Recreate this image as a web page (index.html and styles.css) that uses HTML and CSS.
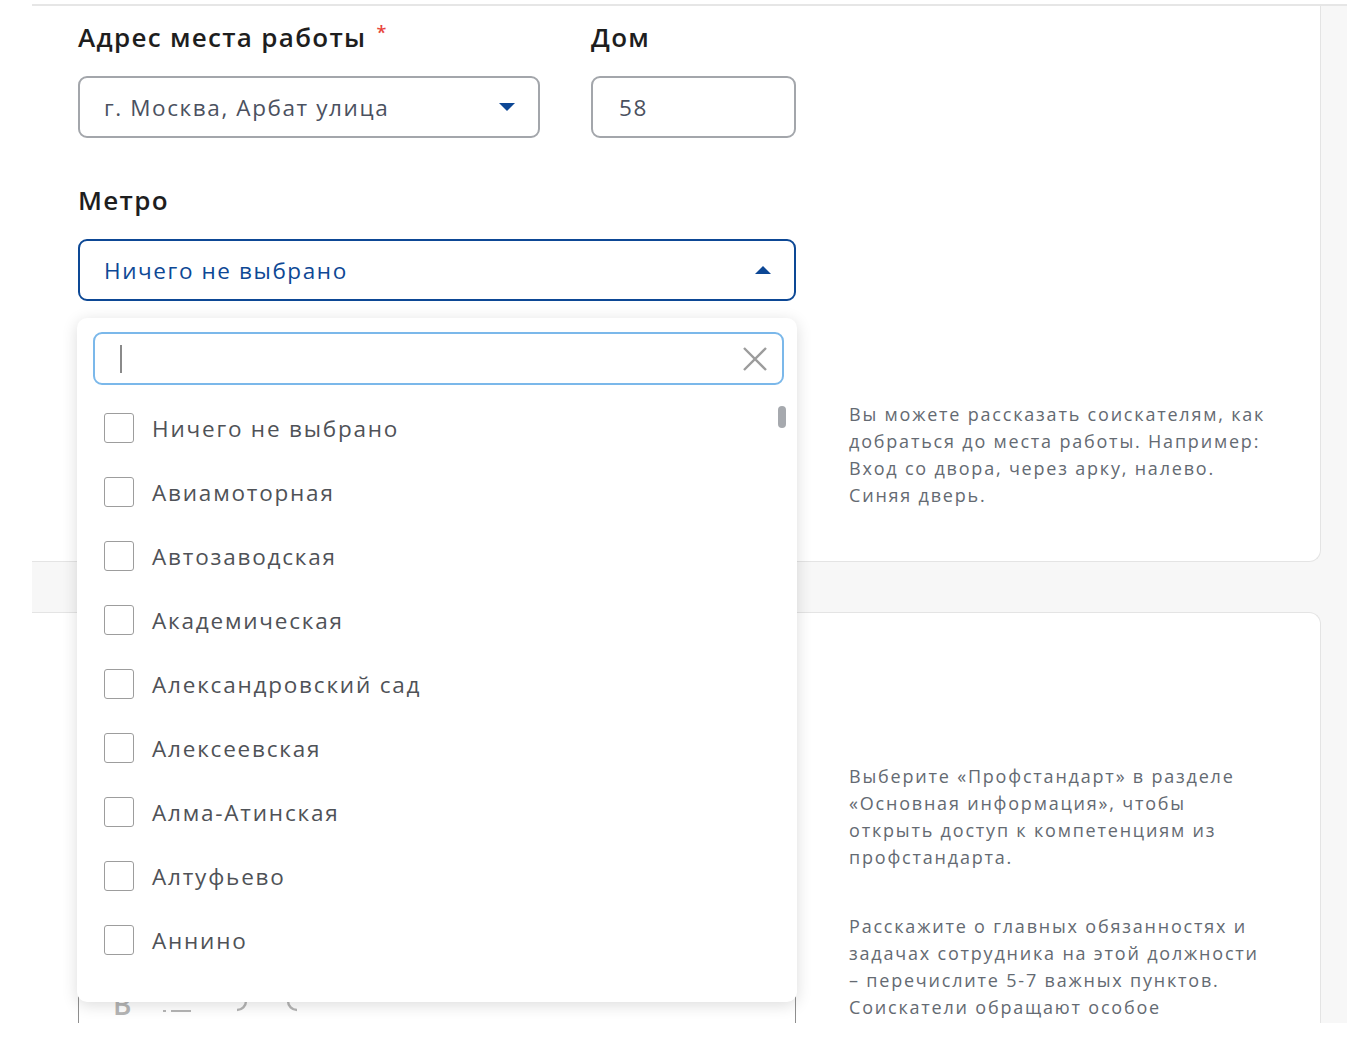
FILE: index.html
```html
<!DOCTYPE html>
<html lang="ru">
<head>
<meta charset="utf-8">
<title>Вакансия — адрес</title>
<link rel="stylesheet" href="styles.css">
</head>
<body>
<div class="topline"></div>
<div class="workspace">
  <section class="card card-top">
    <div class="form-col">
      <div class="row">
        <div class="field field-address">
          <div class="label"><span>Адрес места работы</span><span class="req">*</span></div>
          <div class="control select">
            <span class="value">г. Москва, Арбат улица</span>
            <span class="caret caret-down"></span>
          </div>
        </div>
        <div class="field field-house">
          <div class="label"><span>Дом</span></div>
          <div class="control input"><span class="value">58</span></div>
        </div>
      </div>
      <div class="field field-metro">
        <div class="label"><span>Метро</span></div>
        <div class="control select select-open">
          <span class="value value-active">Ничего не выбрано</span>
          <span class="caret caret-up"></span>
        </div>
        <div class="dropdown">
          <div class="search">
            <span class="text-cursor"></span>
            <svg class="search-clear" width="26" height="26" viewBox="0 0 26 26"><path d="M2 2L24 24M24 2L2 24" stroke="#9c9c9c" stroke-width="2.4" fill="none"/></svg>
          </div>
          <div class="options">
            <ul class="option-list">
              <li class="option"><span class="checkbox"></span><span>Ничего не выбрано</span></li>
              <li class="option"><span class="checkbox"></span><span>Авиамоторная</span></li>
              <li class="option"><span class="checkbox"></span><span>Автозаводская</span></li>
              <li class="option"><span class="checkbox"></span><span>Академическая</span></li>
              <li class="option"><span class="checkbox"></span><span>Александровский сад</span></li>
              <li class="option"><span class="checkbox"></span><span>Алексеевская</span></li>
              <li class="option"><span class="checkbox"></span><span>Алма-Атинская</span></li>
              <li class="option"><span class="checkbox"></span><span>Алтуфьево</span></li>
              <li class="option"><span class="checkbox"></span><span>Аннино</span></li>
            </ul>
            <span class="scroll-thumb"></span>
          </div>
        </div>
      </div>
    </div>
    <aside class="hint hint-route">
      <p>Вы можете рассказать соискателям, как<br>добраться до места работы. Например:<br>Вход со двора, через арку, налево.<br>Синяя дверь.</p>
    </aside>
  </section>
  <section class="card card-bottom">
    <div class="form-col">
      <div class="editor">
        <div class="toolbar">
          <span class="tool tool-bold">B</span>
          <svg class="tool tool-list" width="32" height="24" viewBox="0 0 32 24"><path d="M2 8h3M10 8h20M2 18h3M10 18h20" stroke="#b5b5b5" stroke-width="2.2" fill="none"/></svg>
          <svg class="tool tool-redo" width="18" height="26" viewBox="0 0 18 26"><path d="M4 3a9 9 0 0 1 0 18" stroke="#b5b5b5" stroke-width="2.4" fill="none"/></svg>
          <svg class="tool tool-undo" width="18" height="26" viewBox="0 0 18 26"><path d="M14 3a9 9 0 0 0 0 18" stroke="#b5b5b5" stroke-width="2.4" fill="none"/></svg>
        </div>
      </div>
    </div>
    <aside class="hint hint-duties">
      <p>Выберите «Профстандарт» в разделе<br>«Основная информация», чтобы<br>открыть доступ к компетенциям из<br>профстандарта.</p>
      <p>Расскажите о главных обязанностях и<br>задачах сотрудника на этой должности<br>– перечислите 5-7 важных пунктов.<br>Соискатели обращают особое</p>
    </aside>
  </section>
</div>
</body>
</html>
```
FILE: styles.css
```css
* { box-sizing: border-box; }
html, body { margin: 0; padding: 0; background: #fff; }
body {
  width: 1347px;
  height: 1053px;
  overflow: hidden;
  font-family: "Open Sans", "DejaVu Sans", sans-serif;
  color: #222;
}
.topline {
  height: 6px;
  margin-left: 32px;
  border-bottom: 2px solid #e6e6e6;
}
.workspace {
  margin-left: 32px;
  height: 1017px;
  background: #f7f7f7;
  overflow: hidden;
}
.card {
  width: 1289px;
  background: #fff;
  border-right: 1px solid #e4e4e4;
  display: flex;
}
.card-top {
  height: 556px;
  border-bottom: 1px solid #e4e4e4;
  border-bottom-right-radius: 12px;
  padding: 16px 0 0 46px;
}
.card-bottom {
  margin-top: 50px;
  height: 500px;
  border-top: 1px solid #e4e4e4;
  border-top-right-radius: 12px;
  padding: 0 0 0 46px;
}
.form-col { width: 718px; flex: none; }
.row { display: flex; gap: 51px; }
.field-address { width: 462px; }
.field-house { width: 205px; }
.label {
  font-size: 26px;
  font-weight: 600;
  letter-spacing: 1.3px;
  line-height: 30px;
  color: #1e1e1e;
  margin-bottom: 24px;
  white-space: nowrap;
}
.req {
  color: #e8453c;
  font-size: 18px;
  vertical-align: top;
  margin-left: 10px;
  line-height: 20px;
}
.control {
  height: 62px;
  border: 2px solid #a3a6ab;
  border-radius: 9px;
  display: flex;
  align-items: center;
  padding: 0 23px 0 24px;
  background: #fff;
}
.value {
  font-size: 22.5px;
  letter-spacing: 1.6px;
  color: #4b5160;
  white-space: nowrap;
  flex: 1;
}
.field-house .value { padding-left: 2px; }
.caret {
  width: 0; height: 0;
  border-left: 8px solid transparent;
  border-right: 8px solid transparent;
}
.caret-down { border-top: 8px solid #0d4795; }
.caret-up { border-bottom: 8px solid #0d4795; }
.field-metro { position: relative; margin-top: 47px; }
.select-open { border-color: #0d4895; }
.value-active { color: #0d4895; }

.dropdown {
  position: absolute;
  z-index: 10;
  left: -1px;
  top: 133px;
  width: 720px;
  height: 684px;
  background: #fff;
  border-radius: 10px;
  box-shadow: 0 3px 16px rgba(0, 0, 0, 0.14);
  padding: 14px 13px 0 16px;
}
.search {
  height: 53px;
  border: 2px solid #7bb8ea;
  border-radius: 9px;
  display: flex;
  align-items: center;
  justify-content: space-between;
  padding: 0 14px 0 25px;
}
.text-cursor {
  width: 2px;
  height: 28px;
  background: #8a8a8a;
}
.options { position: relative; }
.option-list {
  list-style: none;
  margin: 0;
  padding: 11px 0 0 11px;
}
.option {
  height: 64px;
  display: flex;
  align-items: center;
  gap: 18px;
  font-size: 22.5px;
  letter-spacing: 1.8px;
  color: #4f5257;
  white-space: nowrap;
}
.checkbox {
  width: 30px;
  height: 30px;
  border: 1.5px solid #9d9d9d;
  border-radius: 3px;
  flex: none;
}
.scroll-thumb {
  position: absolute;
  right: -2px;
  top: 21px;
  width: 8px;
  height: 22px;
  border-radius: 4px;
  background: #a6a9ae;
}

.hint {
  margin-left: 53px;
  width: 440px;
  font-size: 18px;
  letter-spacing: 1.8px;
  line-height: 27px;
  color: #646a72;
  white-space: nowrap;
}
.hint p { margin: 0; }
.hint-route { padding-top: 379px; }
.hint-duties { padding-top: 150px; }
.hint-duties p + p { margin-top: 42px; }

.editor {
  margin-top: 363px;
  height: 200px;
  border: 1px solid #8f8f8f;
  border-radius: 8px;
}
.toolbar {
  display: flex;
  align-items: flex-start;
  padding: 12px 0 0 34px;
}
.tool { color: #b5b5b5; flex: none; }
.tool-bold { font-size: 28px; font-weight: 600; line-height: 30px; }
.tool-list { margin: 4px 0 0 30px; }
.tool-redo { margin: 0 0 0 40px; }
.tool-undo { margin: 0 0 0 32px; }
```
